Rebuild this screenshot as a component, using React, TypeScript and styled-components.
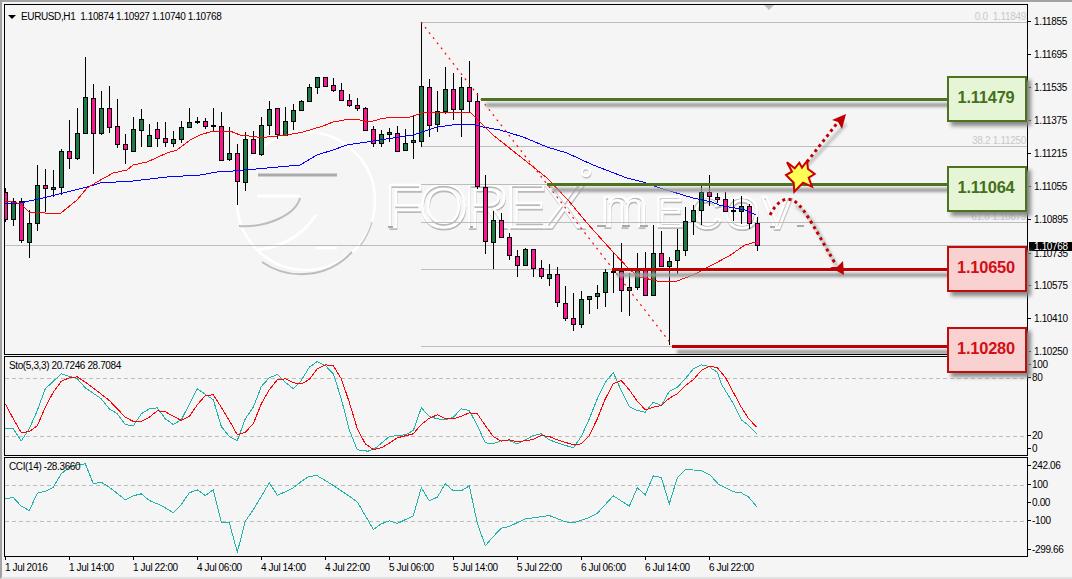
import React from "react";
import styled, { createGlobalStyle } from "styled-components";

const Global = createGlobalStyle`
  html, body { margin: 0; padding: 0; background: #f5f5f5; }
  #root { width: 1072px; height: 579px; overflow: hidden; }
`;

const UI_FONT = `"Liberation Sans", Arial, sans-serif`;

const Window = styled.div`
  position: relative;
  box-sizing: border-box;
  width: 1072px;
  height: 579px;
  overflow: hidden;
  background: #f5f5f5;
  border-top: 2px solid #a3a3a3;
  border-left: 2px solid #a3a3a3;
  border-bottom: 2px solid #e2e2e2;
  padding: 2px 0 0 2px;
  display: flex;
  flex-direction: column;
  gap: 1px;
  font-family: ${UI_FONT};
  font-size: 10px;
  letter-spacing: -0.38px;
  color: #000;
`;

const Row = styled.div`
  display: flex;
  flex: none;
  height: ${(p) => p.$height}px;
`;

const Pane = styled.div`
  position: relative;
  box-sizing: border-box;
  width: 1024px;
  height: 100%;
  border: 1px solid #000;
  background: #f5f5f5;
  overflow: hidden;
`;

const PaneDrawing = styled.svg`
  display: block;
  width: 1022px;
  height: 100%;
`;

const AxisDrawing = styled.svg`
  display: block;
  flex: none;
  width: 44px;
  height: 100%;
  overflow: visible;
  font-family: ${UI_FONT};
  font-size: 10px;
  letter-spacing: -0.35px;
`;

const Legend = styled.div`
  position: absolute;
  top: ${(p) => p.$top}px;
  left: ${(p) => p.$left}px;
  display: flex;
  align-items: center;
  gap: 5px;
  white-space: pre;
  line-height: 12px;
`;

const SymbolArrow = styled.span`
  width: 0;
  height: 0;
  border-left: 4px solid transparent;
  border-right: 4px solid transparent;
  border-top: 4px solid #000;
  margin-left: -9px;
`;

const ShiftMarker = styled.span`
  position: absolute;
  top: 0;
  left: 759px;
  width: 0;
  height: 0;
  border-left: 5px solid transparent;
  border-right: 5px solid transparent;
  border-top: 5px solid #bdbdbd;
`;

const TimeAxis = styled.div`
  display: flex;
  flex: none;
  height: 20px;
  padding-left: 1px;
  margin-top: -1px;
`;

const TimeLabel = styled.div`
  position: relative;
  flex: 0 0 64px;
  padding-top: 5px;
  line-height: 12px;
  white-space: pre;
  &::before {
    content: "";
    position: absolute;
    top: 0;
    left: 0;
    width: 1px;
    height: 3px;
    background: #000;
  }
`;

const tones = {
  green: { border: "#4c7420", fill: "#e7f5d7", text: "#44701c" },
  red: { border: "#bd0d0d", fill: "#f9d1d1", text: "#d10f17" },
};

const LevelBox = styled.div`
  position: absolute;
  left: 945px;
  top: ${(p) => p.$top}px;
  box-sizing: border-box;
  width: 80px;
  height: 46px;
  display: flex;
  align-items: center;
  justify-content: center;
  border: 2px solid ${(p) => tones[p.$tone].border};
  background: ${(p) => tones[p.$tone].fill};
  color: ${(p) => tones[p.$tone].text};
  box-shadow: 4px 4px 4px #8a8a8a;
  font-size: 16.4px;
  font-weight: 700;
  letter-spacing: -0.2px;
  padding: 0 2px 3px 0;
`;

type Candle = [number, number, number, number, "g" | "p"];
const candles: Candle[] = [
  [192,219,188,222,"p"],[201,219,198,226,"g"],[201,240,198,243,"p"],[223,242,210,258,"g"],
  [185,223,165,231,"g"],[185,188,169,212,"p"],[187,189,170,197,"g"],[151,187,149,195,"g"],
  [151,158,120,169,"p"],[133,158,108,160,"g"],[97,133,57,133,"g"],[98,133,84,174,"p"],
  [108,133,91,135,"g"],[108,127,86,133,"p"],[126,144,99,148,"p"],[144,149,134,164,"p"],
  [129,151,117,152,"g"],[119,130,109,147,"g"],[135,146,124,147,"g"],[129,138,122,147,"p"],
  [138,142,122,147,"p"],[139,143,131,147,"g"],[127,139,121,143,"g"],[122,127,108,127,"g"],
  [121,122,117,124,"g"],[121,126,118,129,"p"],[125,126,108,131,"g"],[126,160,112,160,"p"],
  [153,159,127,161,"g"],[153,181,144,205,"p"],[139,182,132,191,"g"],[139,153,131,154,"p"],
  [125,154,117,156,"g"],[109,125,101,135,"g"],[108,134,108,139,"p"],[121,135,107,135,"g"],
  [110,121,104,130,"g"],[101,110,100,111,"g"],[87,101,84,101,"g"],[77,87,77,94,"g"],
  [77,86,77,86,"p"],[85,90,78,92,"p"],[90,100,83,100,"p"],[100,105,94,107,"p"],
  [105,108,98,111,"p"],[108,130,107,131,"p"],[129,143,126,147,"p"],[134,143,130,147,"g"],
  [132,134,128,142,"g"],[133,151,126,151,"p"],[143,150,129,151,"g"],[140,142,116,159,"g"],
  [86,141,22,147,"g"],[87,125,79,137,"p"],[111,124,91,132,"g"],[89,111,67,114,"g"],
  [89,109,73,120,"p"],[87,109,77,137,"g"],[87,101,61,113,"p"],[101,186,93,189,"p"],
  [187,241,175,254,"p"],[220,242,211,269,"g"],[220,237,213,238,"p"],[237,255,233,260,"p"],
  [256,265,250,277,"p"],[249,265,248,266,"g"],[249,268,249,277,"p"],[268,276,260,279,"p"],
  [274,278,264,286,"g"],[274,302,267,307,"p"],[303,318,286,321,"p"],[318,324,293,331,"p"],
  [299,324,291,328,"g"],[296,299,296,314,"g"],[293,296,285,309,"g"],[272,292,269,307,"g"],
  [271,271,253,293,"g"],[271,290,243,312,"p"],[287,290,273,316,"g"],[269,287,253,290,"g"],
  [269,295,252,296,"p"],[253,295,225,295,"g"],[253,266,231,267,"p"],[261,266,257,345,"g"],
  [250,260,229,274,"g"],[221,250,207,256,"g"],[210,221,205,235,"g"],[192,210,186,225,"g"],
  [192,196,175,206,"p"],[197,199,193,203,"p"],[199,211,192,212,"p"],[210,211,199,221,"g"],
  [206,211,196,224,"g"],[206,223,204,229,"p"],[223,245,217,251,"p"],
];

const redMA = "5,201 13,202 21,204 29,212 37,212 45,213 61,213 77,200 87,188 97,182 113,173 127,170 133,165 147,162 167,153 177,150 190,140 200,135 213,131 222,132 230,131 240,135 257,137 267,137 287,135 303,132 323,126 333,122 350,119 360,120 370,122 380,119 393,117 410,117 422,113 447,112 470,112 475,117 480,122 493,135 527,162 547,178 568,200 587,223 613,252 630,270 640,277 657,281 677,281 693,275 712,265 729,256 745,245 756,242";
const blueMA = "5,204 20,203 43,198 67,192 87,187 100,183 133,181 167,177 200,175 217,172 233,171 267,168 300,165 317,155 333,150 347,145 360,143 393,138 413,135 437,127 460,124 473,124 483,127 500,130 523,137 547,147 567,153 593,165 627,178 643,182 660,188 693,198 712,202 719,205 745,210 756,215";

type Seg = [number, number[]];
const trace = (segs: Seg[]) =>
  segs
    .map(([ox, v]) => {
      const out: string[] = [];
      for (let i = 0; i < v.length; i += 2) {
        out.push(`${(ox + v[i] / 3).toFixed(1)},${(350 + v[i + 1] / 3).toFixed(1)}`);
      }
      return out.join(" ");
    })
    .join(" ");

const stoMain = trace([
  [0,[16,235,40,235,64,271,88,235,112,180,136,115,184,70,232,85,256,112,304,145,328,175,352,190,376,222,400,226,424,190,448,175,472,172,496,205,520,222,544,208,592,115,640,148,664,228,688,258,712,270,736,205,760,170,784,108,808,82,832,72,856,95,880,115,904,90,928,50,952,33,976,45,1000,70,1024,145,1048,238,1072,298]],
  [360,[24,302,48,292,88,258,136,253,160,240,184,172,208,198,232,205,256,208,280,200,304,175,328,180,352,225,376,277,400,280,424,270,448,270,472,280,496,268,520,255,544,250,568,268,592,277,640,292,664,258,688,205,712,145,736,95,760,67,784,120,808,168,832,180,856,185,880,155,904,165,928,122,952,110,976,85,1000,55,1024,43,1048,48]],
  [712,[0,55,16,65,28,100,64,160,88,208,110,225,134,250]],
]);
const stoSignal = trace([
  [0,[16,160,40,205,64,247,88,243,112,226,136,170,160,125,184,92,208,82,232,79,256,95,296,125,328,150,376,200,400,213,424,213,448,200,472,181,496,184,544,210,568,198,592,163,616,135,640,133,664,170,688,210,712,253,736,245,760,220,784,160,808,118,832,88,856,85,880,97,904,100,928,87,952,55,976,43,1000,46,1024,85,1048,155,1072,235]],
  [360,[16,280,40,297,64,292,88,278,112,262,160,250,184,222,208,203,232,193,256,205,280,205,304,197,328,187,352,190,376,225,400,258,424,272,448,268,472,274,520,267,544,255,568,258,592,268,640,283,664,280,688,255,712,205,736,145,760,100,784,90,808,118,832,152,856,178,880,170,904,165,928,143,952,130,976,105,1000,88,1024,60,1048,48]],
  [712,[0,48,16,52,40,80,64,125,88,170,110,205,134,230]],
]);
const cciLine = trace([
  [0,[16,445,40,441,64,467,88,480,112,428,136,422,160,410,184,370,208,350,232,343,256,340,280,400,304,395,328,410,376,448,400,436,424,430,448,450,472,460,496,472,520,487,544,462,568,427,592,418,616,435,640,418,664,516,688,516,712,605,736,512,760,478,808,397,832,434,856,424,880,412,904,393,928,377,952,376,976,390,1000,405,1048,437,1072,455]],
  [360,[0,468,40,537,64,520,88,511,112,519,160,496,184,412,208,451,232,440,256,400,280,421,304,421,328,406,352,518,376,586,400,558,424,533,448,528,496,505,520,502,568,495,616,514,640,517,688,501,712,488,760,436,808,467,832,412,856,433,880,376,904,381,928,460,952,382,976,357,1024,360,1048,372]],
  [712,[0,380,20,402,64,424,88,427,110,440,134,468]],
]);

const priceTicks: [string, number][] = [
  ["1.11855",21],["1.11695",54],["1.11535",87],["1.11375",120],["1.11215",153],["1.11055",186],
  ["1.10895",219],["1.10735",253],["1.10575",285],["1.10410",318],["1.10250",351],
];
const fibLevels = [22, 146, 184, 222, 269, 346];
const fibLabels: [string, number][] = [["0.0  1.11849", 20], ["38.2 1.11250", 144], ["61.8 1.10879", 220]];
const levels: { y: number; x: number; color: string }[] = [
  { y: 99, x: 481, color: "#4c7420" },
  { y: 184, x: 547, color: "#4c7420" },
  { y: 269, x: 612, color: "#bd0000" },
  { y: 346, x: 672, color: "#bd0000" },
];
const times = ["1 Jul 2016","1 Jul 14:00","1 Jul 22:00","4 Jul 06:00","4 Jul 14:00","4 Jul 22:00","5 Jul 06:00","5 Jul 14:00","5 Jul 22:00","6 Jul 06:00","6 Jul 14:00","6 Jul 22:00"];

const CandleMark = ({ c, i }: { c: Candle; i: number }) => {
  const x = 5.5 + 8 * i;
  return (
    <g shapeRendering="crispEdges">
      <line x1={x} x2={x} y1={c[2]} y2={c[3]} stroke="#000" />
      <rect x={x - 2} y={c[0] + 0.5} width={4} height={Math.max(c[1] - c[0], 1)} fill={c[4] === "g" ? "#1c7a46" : "#ff1493"} stroke="#000" />
    </g>
  );
};

const Watermark = () => (
  <g fontFamily={`"Liberation Sans", Arial, sans-serif`} fill="none">
    <circle cx={306} cy={201} r={69} stroke="#fff" strokeWidth={2.5} />
    <path d="M262 262 A69 69 0 0 0 352 252" stroke="#bdbdbd" strokeWidth={2} />
    <path d="M372 222 A69 69 0 0 1 360 246" stroke="#c8c8c8" strokeWidth={1.5} />
    <path d="M258 175 H337" stroke="#ababab" strokeWidth={3} />
    <path d="M257 196 H300" stroke="#fff" strokeWidth={3} />
    <path d="M300 198 C296 214 268 228 239 226" stroke="#bdbdbd" strokeWidth={2} />
    <path d="M316 215 C302 236 280 248 256 250" stroke="#fff" strokeWidth={3} />
    <path d="M316 248 H337" stroke="#fff" strokeWidth={3} />
    {[0, 1].map((n) => (
      <g key={n} stroke={n ? "#fff" : "#b9b9b9"} strokeWidth={n ? 2.4 : 2} transform={n ? undefined : "translate(0.5 1.6)"}>
        <text x={385} y={227} fontSize={62} letterSpacing={-3.4}>FOREX</text>
        <circle cx={586} cy={172} r={4} />
        <text x={601} y={226} fontSize={56}>m</text>
        <text x={655} y={226} fontSize={42}>E</text>
        <text x={690} y={228} fontSize={44} letterSpacing={3}>COV</text>
      </g>
    ))}
    <path d="M388 227 H393 M470 227 H473 M597 226 H606 M622 226 H630 M640 226 H648 M770 227 H775 M797 226 H804" stroke="#a9a9a9" strokeWidth={2} />
  </g>
);

const MainDrawing = () => (
  <PaneDrawing viewBox="5 5 1022 349">
    <defs>
      <filter id="soft" x="-10%" y="-300%" width="120%" height="700%">
        <feGaussianBlur stdDeviation="1.6" />
      </filter>
    </defs>
    <Watermark />
    <g stroke="#bcbcbc" shapeRendering="crispEdges">
      <line x1={5} x2={1027} y1={245.5} y2={245.5} />
      {fibLevels.map((y) => (
        <line key={y} x1={421} x2={1027} y1={y + 0.5} y2={y + 0.5} />
      ))}
    </g>
    <g fontFamily={UI_FONT} fontSize={10} fill="#c9c9c9" textAnchor="end" letterSpacing={-0.3}>
      {fibLabels.map(([t, y]) => (
        <text key={t} x={1026} y={y} xmlSpace="preserve">{t}</text>
      ))}
    </g>
    {candles.map((c, i) => (
      <CandleMark key={i} c={c} i={i} />
    ))}
    <polyline points={blueMA} fill="none" stroke="#0000ff" shapeRendering="crispEdges" />
    <polyline points={redMA} fill="none" stroke="#ff0000" shapeRendering="crispEdges" />
    <line x1={421} y1={22} x2={672} y2={345} stroke="#ff0000" strokeWidth={1.2} strokeDasharray="2 4.5" />
    {levels.map((l) => (
      <g key={l.y}>
        <rect x={l.x + 5} y={l.y + 4} width={945 - l.x} height={4} fill="#9c9c9c" filter="url(#soft)" />
        <rect x={l.x} y={l.y - 1} width={947 - l.x} height={3} fill={l.color} shapeRendering="crispEdges" />
      </g>
    ))}
    <g fill="none" stroke="#9a9a9a" strokeWidth={3} opacity={0.65} filter="url(#soft)">
      <path d="M805 168 L846 124" />
      <path d="M796 206 Q806 212 814 224 L842 276" />
    </g>
    <g fill="none" stroke="#c00000" strokeWidth={3} strokeDasharray="3 3.4">
      <path d="M807 162 L838 122" />
      <path d="M770 215 C776 203 784 197 792 200 C802 204 810 220 836 265" />
    </g>
    <polygon points="846,114 832,120 838,122 842,129" fill="#c00000" />
    <polygon points="844,275 843,261 837,267 830,267" fill="#c00000" />
    <polygon
      points="787,162.3 794.7,168.3 799.3,162.7 802,167.7 807,161 808,169 814.7,174 808.7,177.7 812,186.7 803,182.7 794.3,191.7 793.7,182.7 786,175 792,171.7"
      fill="#ffff55"
      stroke="#c80000"
      strokeWidth={2}
    />
  </PaneDrawing>
);

const Oscillator = ({ top, guides, children }: { top: number; guides: number[]; children: React.ReactNode }) => (
  <PaneDrawing viewBox={`5 ${top} 1022 97`}>
    {guides.map((y) => (
      <line key={y} x1={5} x2={1027} y1={y + 0.5} y2={y + 0.5} stroke="#bcbcbc" strokeDasharray="4 3" shapeRendering="crispEdges" />
    ))}
    {children}
  </PaneDrawing>
);

const Axis = ({ top, height, ticks, labelX = 1034 }: { top: number; height: number; ticks: [string, number][]; labelX?: number }) => (
  <AxisDrawing viewBox={`1028 ${top} 44 ${height}`}>
    {ticks.map(([t, y]) => (
      <g key={t}>
        <line x1={1028} x2={1031} y1={y + 0.5} y2={y + 0.5} stroke="#000" shapeRendering="crispEdges" />
        <text x={labelX} y={y + 3.5}>{t}</text>
      </g>
    ))}
  </AxisDrawing>
);

export default function App() {
  return (
    <Window>
      <Global />
      <Row $height={351}>
        <Pane>
          <MainDrawing />
          <ShiftMarker />
          <Legend $top={6} $left={12}>
            <SymbolArrow />
            {"EURUSD,H1  1.10874 1.10927 1.10740 1.10768"}
          </Legend>
        </Pane>
        <AxisDrawing viewBox="1028 4 44 351">
          {priceTicks.map(([t, y]) => (
            <g key={t}>
              <line x1={1028} x2={1031} y1={y + 0.5} y2={y + 0.5} stroke="#000" shapeRendering="crispEdges" />
              <text x={1034} y={y + 3.5}>{t}</text>
            </g>
          ))}
          <rect x={1029} y={242} width={43} height={9} fill="#000" />
          <text x={1034} y={250} fill="#fff">1.10768</text>
        </AxisDrawing>
      </Row>
      <Row $height={100}>
        <Pane>
          <Oscillator top={357} guides={[377, 435]}>
            <polyline points={stoMain} fill="none" stroke="#20b2aa" shapeRendering="crispEdges" />
            <polyline points={stoSignal} fill="none" stroke="#ff0000" shapeRendering="crispEdges" />
          </Oscillator>
          <Legend $top={3} $left={4}>Sto(5,3,3) 20.7246 28.7084</Legend>
        </Pane>
        <Axis top={356} height={100} labelX={1032} ticks={[["100",364],["80",377],["20",435],["0",448]]} />
      </Row>
      <Row $height={100}>
        <Pane>
          <Oscillator top={458} guides={[484, 520]}>
            <polyline points={cciLine} fill="none" stroke="#20b2aa" shapeRendering="crispEdges" />
          </Oscillator>
          <Legend $top={3} $left={4}>CCI(14) -28.3660</Legend>
        </Pane>
        <Axis top={457} height={100} labelX={1032} ticks={[["242.06",465],["100",484],["0.00",502],["-100",520],["-299.66",549]]} />
      </Row>
      <TimeAxis>
        {times.map((t) => (
          <TimeLabel key={t}>{t}</TimeLabel>
        ))}
      </TimeAxis>
      <LevelBox $tone="green" $top={74}>1.11479</LevelBox>
      <LevelBox $tone="green" $top={164}>1.11064</LevelBox>
      <LevelBox $tone="red" $top={244}>1.10650</LevelBox>
      <LevelBox $tone="red" $top={325}>1.10280</LevelBox>
    </Window>
  );
}
